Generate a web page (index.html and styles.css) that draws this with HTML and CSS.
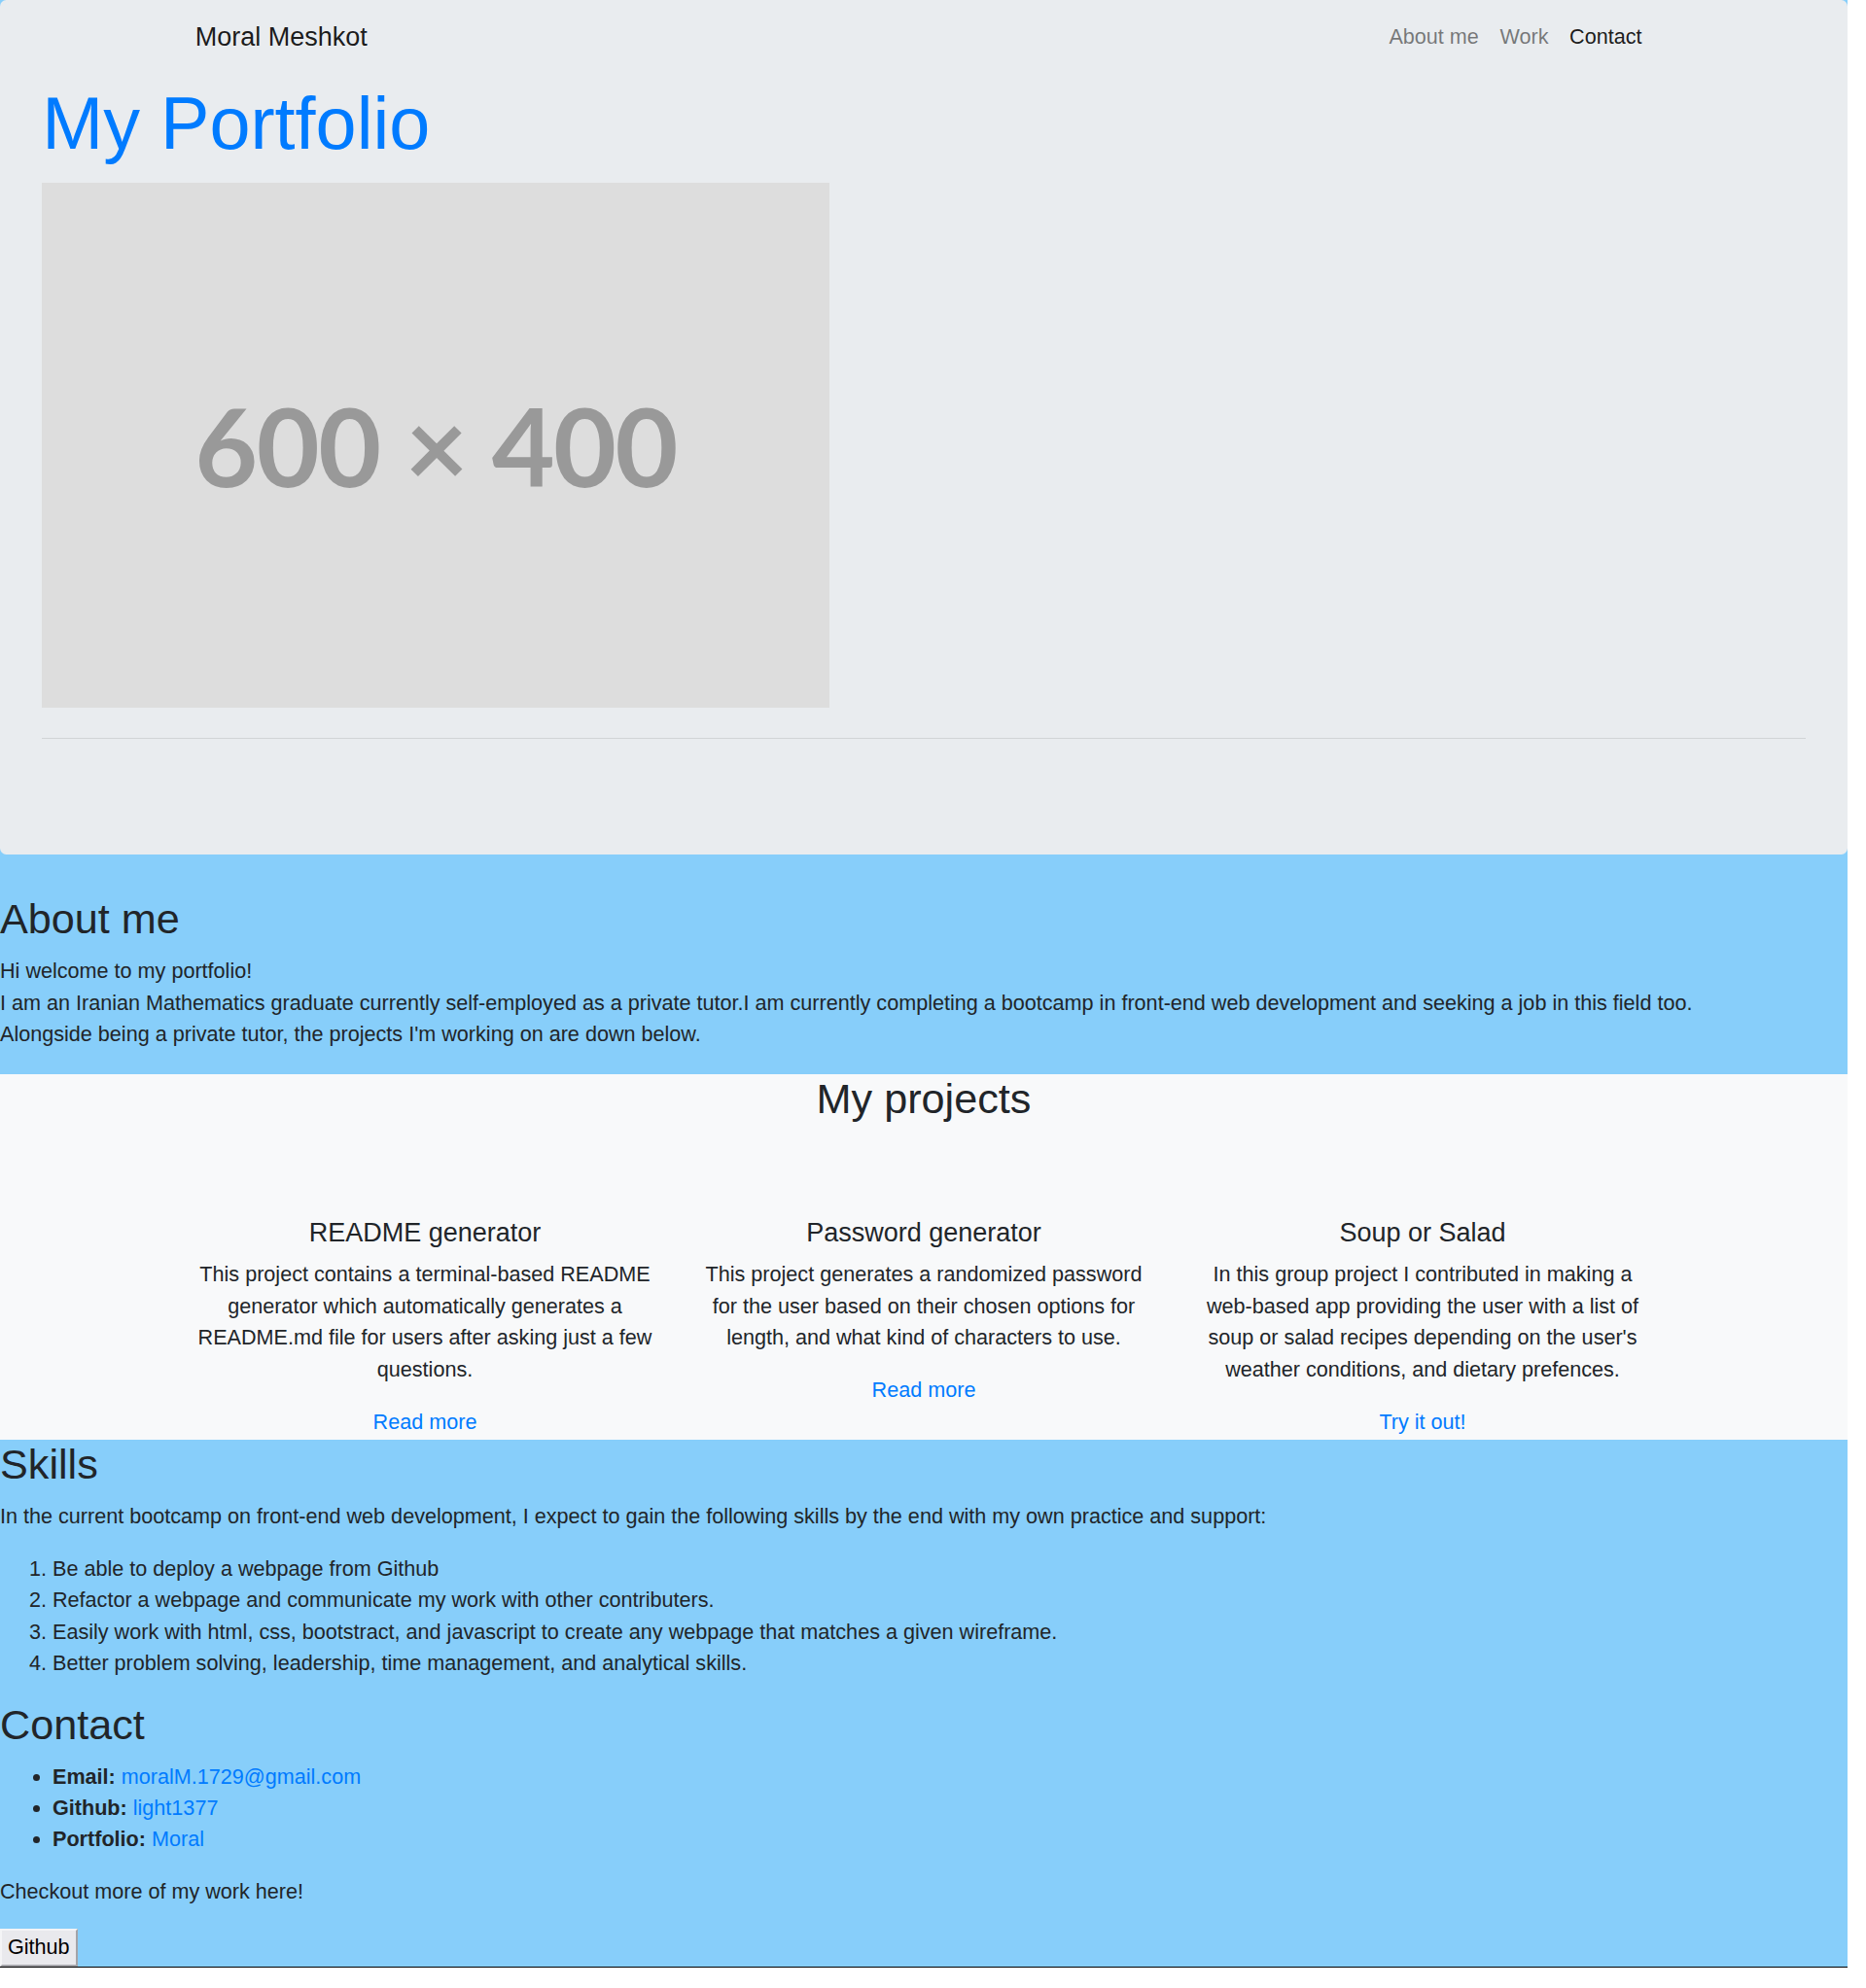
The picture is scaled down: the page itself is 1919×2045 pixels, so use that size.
FILE: index.html
```html
<!DOCTYPE html>
<html lang="en">
<head>
<meta charset="utf-8">
<title>Moral Meshkot - Portfolio</title>
<link rel="stylesheet" href="styles.css">
</head>
<body>
<div class="page">
  <header class="hero">
    <nav class="navbar">
      <a class="brand" href="#">Moral Meshkot</a>
      <ul class="nav">
        <li><a class="nav-link" href="#about">About me</a></li>
        <li><a class="nav-link" href="#work">Work</a></li>
        <li><a class="nav-link active" href="#contact">Contact</a></li>
      </ul>
    </nav>
    <h1 class="title">My Portfolio</h1>
    <div class="placeholder"><span class="placeholder-text">600 × 400</span></div>
    <hr class="divider">
  </header>

  <section class="about" id="about">
    <h2 class="section-title">About me</h2>
    <p class="text">Hi welcome to my portfolio!<br>I am an Iranian Mathematics graduate currently self-employed as a private tutor.I am currently completing a bootcamp in front-end web development and seeking a job in this field too.<br>Alongside being a private tutor, the projects I'm working on are down below.</p>
  </section>

  <section class="projects" id="work">
    <h2 class="section-title centered">My projects</h2>
    <div class="project-grid">
      <div class="project">
        <h5 class="project-title">README generator</h5>
        <p class="text">This project contains a terminal-based README generator which automatically generates a README.md file for users after asking just a few questions.</p>
        <a class="link" href="#">Read more</a>
      </div>
      <div class="project">
        <h5 class="project-title">Password generator</h5>
        <p class="text">This project generates a randomized password for the user based on their chosen options for length, and what kind of characters to use.</p>
        <a class="link" href="#">Read more</a>
      </div>
      <div class="project">
        <h5 class="project-title">Soup or Salad</h5>
        <p class="text">In this group project I contributed in making a web-based app providing the user with a list of soup or salad recipes depending on the user's weather conditions, and dietary prefences.</p>
        <a class="link" href="#">Try it out!</a>
      </div>
    </div>
  </section>

  <section class="skills">
    <h2 class="section-title">Skills</h2>
    <p class="text">In the current bootcamp on front-end web development, I expect to gain the following skills by the end with my own practice and support:</p>
    <ol class="list">
      <li>Be able to deploy a webpage from Github</li>
      <li>Refactor a webpage and communicate my work with other contributers.</li>
      <li>Easily work with html, css, bootstract, and javascript to create any webpage that matches a given wireframe.</li>
      <li>Better problem solving, leadership, time management, and analytical skills.</li>
    </ol>
  </section>

  <section class="contact" id="contact">
    <h2 class="section-title">Contact</h2>
    <ul class="list">
      <li><strong>Email:</strong> <a class="link" href="#">moralM.1729@gmail.com</a></li>
      <li><strong>Github:</strong> <a class="link" href="#">light1377</a></li>
      <li><strong>Portfolio:</strong> <a class="link" href="#">Moral</a></li>
    </ul>
    <p class="text">Checkout more of my work here!</p>
    <button class="btn" type="button">Github</button>
  </section>
</div>
</body>
</html>
```

FILE: styles.css
```css
html {
  background: #ffffff;
}

body {
  margin: 0;
  font-family: "Liberation Sans", Arial, sans-serif;
  font-size: 21.6px;
  line-height: 32.4px;
  color: #212529;
}

.page {
  width: 1900px;
  background: #87cefa;
  border-bottom: 1px solid #000000;
}

a {
  text-decoration: none;
}

/* ---------- hero / jumbotron ---------- */
.hero {
  background: #e9ecef;
  border-radius: 6.5px;
  padding: 0 43.2px;
}

.navbar {
  width: 1539px;
  margin: 0 auto;
  box-sizing: border-box;
  padding: 10.8px 20.25px;
  display: flex;
  align-items: center;
  justify-content: space-between;
}

.brand {
  font-size: 27px;
  line-height: 40.5px;
  padding: 6.75px 0;
  color: rgba(0, 0, 0, 0.9);
}

.nav {
  list-style: none;
  margin: 0;
  padding: 0;
  display: flex;
}

.nav-link {
  display: block;
  padding: 10.8px;
  font-size: 21.6px;
  line-height: 32.4px;
  color: rgba(0, 0, 0, 0.5);
}

.nav-link.active {
  color: rgba(0, 0, 0, 0.9);
}

.title {
  margin: 6.7px 0 14.8px;
  font-size: 75.6px;
  font-weight: 300;
  line-height: 1.2;
  color: #007bff;
}

.placeholder {
  width: 810px;
  height: 540px;
  background: #dddddd;
  display: flex;
  align-items: center;
  justify-content: center;
}

.placeholder-text {
  font-family: Lato, "Liberation Sans", sans-serif;
  font-weight: 700;
  font-size: 112px;
  letter-spacing: -1.5px;
  line-height: 1;
  color: #999999;
}

.divider {
  margin: 31.6px 0 0;
  padding-bottom: 118.5px;
  border: 0;
  border-top: 1px solid rgba(0, 0, 0, 0.1);
}

/* ---------- sections ---------- */
.section-title {
  margin: 0 0 10.8px;
  font-size: 43.2px;
  font-weight: 500;
  line-height: 1.2;
}

.centered {
  text-align: center;
}

.text {
  margin: 0 0 21.6px;
}

.link {
  color: #007bff;
}

.about {
  padding: 41.6px 0 3.1px;
}

.projects {
  background: #f8f9fa;
  padding: 0 0 2px;
}

.project-grid {
  width: 1539px;
  margin: 95.4px auto 0;
  display: grid;
  grid-template-columns: repeat(3, 1fr);
  text-align: center;
}

.project {
  padding: 0 20.25px;
}

.project-title {
  margin: 0 0 10.8px;
  font-size: 27px;
  font-weight: 500;
  line-height: 1.2;
}

.list {
  margin: 0 0 21.6px;
  padding-left: 54px;
}

.contact {
  padding-bottom: 0.7px;
}

.contact strong {
  font-weight: 700;
}

.btn {
  display: block;
  margin: 0;
  padding: 1px 6px;
  font-family: "Liberation Sans", Arial, sans-serif;
  font-size: 21.6px;
  line-height: 32.4px;
  color: #000000;
  background: #e9e9ed;
  border-style: solid;
  border-width: 2px;
  border-color: #f4f4f6 #a3a3a8 #a3a3a8 #f4f4f6;
  border-radius: 0;
}
```
